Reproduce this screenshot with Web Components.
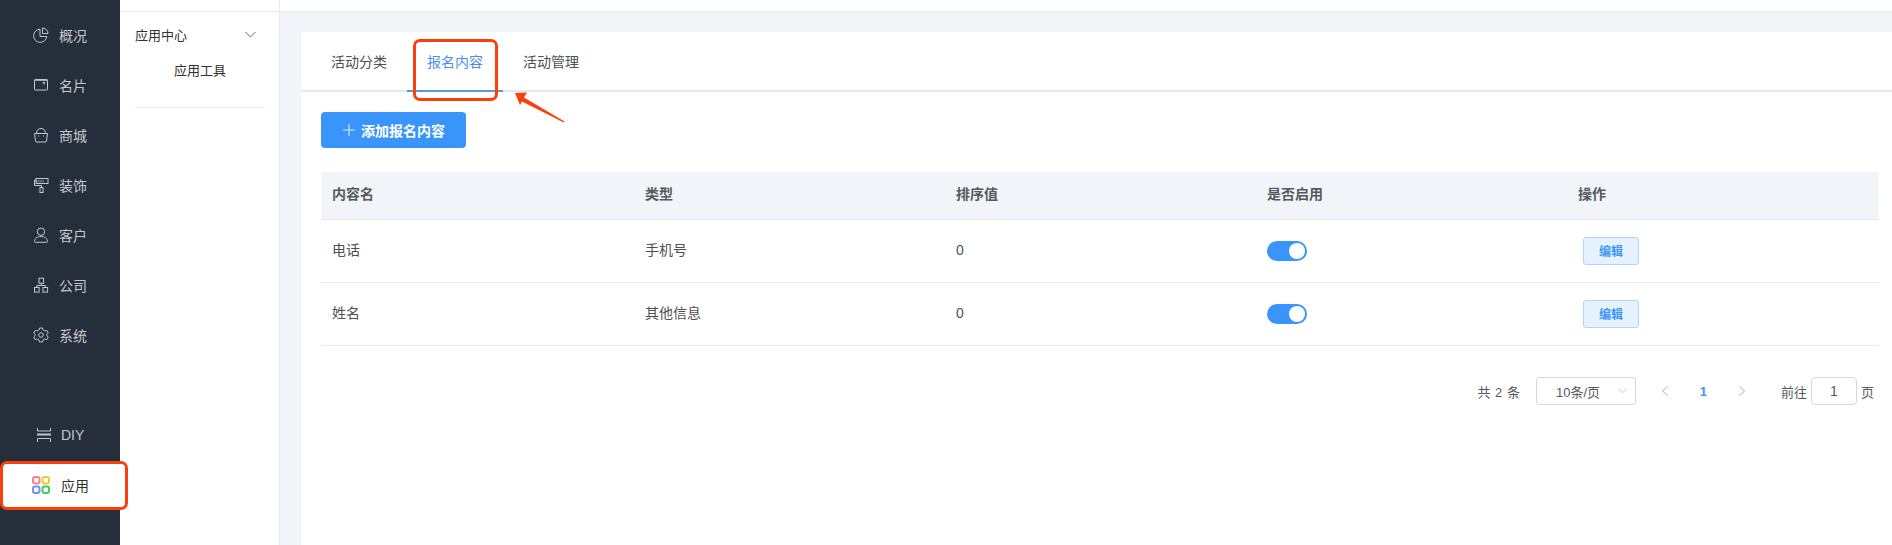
<!DOCTYPE html>
<html lang="zh">
<head>
<meta charset="utf-8">
<title>报名内容</title>
<style>
  html, body { margin: 0; height: 100%; overflow: hidden; }
  body { font-family: "Liberation Sans", "Noto Sans CJK SC", sans-serif; font-size: 14px; }
</style>
</head>
<body>
<app-shell>
  <side-nav slot="nav">
    <nav-item label="概况" icon="pie"></nav-item>
    <nav-item label="名片" icon="wallet"></nav-item>
    <nav-item label="商城" icon="bag"></nav-item>
    <nav-item label="装饰" icon="roller"></nav-item>
    <nav-item label="客户" icon="user"></nav-item>
    <nav-item label="公司" icon="org"></nav-item>
    <nav-item label="系统" icon="gear"></nav-item>
    <nav-item slot="bottom" label="DIY" icon="diy"></nav-item>
    <nav-item slot="bottom" label="应用" icon="apps" active></nav-item>
  </side-nav>
  <sub-nav slot="sub"></sub-nav>
  <tab-card>
    <tab-bar></tab-bar>
    <add-button>添加报名内容</add-button>
    <data-table></data-table>
    <page-bar></page-bar>
  </tab-card>
</app-shell>

<script>
const ICONS = {
  pie: '<path d="M7 2.200A6.600 6.600 0 1 0 13.800 9.500H7z"/><path d="M9.500 1A5.500 5.500 0 0 1 15 6.500H9.500z"/>',
  wallet: '<rect x="1.500" y="2.500" width="13" height="10.500" rx=".8"/><path d="M1.500 3.200h13" stroke-width="1.200"/><circle cx="11" cy="6" r=".9"/>',
  bag: '<path d="M1.500 6.500h13l-1 7.500a1 1 0 0 1-1 1h-9a1 1 0 0 1-1-1z"/><path d="M3.500 6.500C3.500 3 5.500 1.500 8 1.500s4.500 1.500 4.500 5"/><path d="M5.500 8.500v1M10.500 8.500v1"/>',
  roller: '<rect x="3" y="1.500" width="12" height="5"/><path d="M3 3h8v2.500H3z" fill="currentColor" opacity=".35" stroke="none"/><path d="M3 3H1.500v5.500h7v2"/><rect x="7" y="10.500" width="3" height="5"/>',
  user: '<circle cx="8" cy="4.700" r="3.700"/><path d="M1.500 14.500c0-3 2.500-5 6.500-5s6.500 2 6.500 5c0 .5-.3.8-1 .8h-11c-.7 0-1-.3-1-.8z"/>',
  org: '<rect x="6" y="1.200" width="4.600" height="5"/><rect x="1.500" y="10.500" width="4.600" height="4.600"/><rect x="10" y="10.500" width="4.600" height="4.600"/><path d="M8.300 6.200v2.300H3.800v2M8.300 8.500h4v2"/>',
  gear: '<path stroke-linejoin="round" d="M6.500 1h3l.5 2 1.800 1 2-.6 1.500 2.600-1.500 1.400v1.200l1.500 1.400-1.500 2.600-2-.6-1.800 1-.5 2h-3l-.5-2-1.800-1-2 .6-1.500-2.600 1.500-1.400V7.400L.7 6l1.500-2.600 2 .6 1.800-1z"/><circle cx="8" cy="8" r="2.300"/>',
  diy: '<path d="M1.500 1v3h13V1"/><path d="M1 7.500h14" stroke-width="2"/><path d="M1.500 15v-3.500h13V15"/>'
}
const APPS_ICON = `<svg viewBox="0 0 18 18" width="18" height="18" fill="none" stroke-width="2">
  <rect x="1" y="1" width="6.500" height="6.500" rx="2" stroke="#f9808a"/>
  <rect x="10.500" y="1" width="6.500" height="6.500" rx="2" stroke="#fbc531"/>
  <rect x="1" y="10.500" width="6.500" height="6.500" rx="2" stroke="#6f93f5"/>
  <rect x="10.500" y="10.500" width="6.500" height="6.500" rx="2" stroke="#3fca68"/>
</svg>`

class AppShell extends HTMLElement {
  constructor() {
    super()
    this.attachShadow({ mode: 'open' }).innerHTML = `
      <style>
        :host { display: flex; height: 545px; background: #f1f4f8; }
        .right { flex: 1; min-width: 0; display: flex; flex-direction: column; }
        .top { height: 11px; flex: none; background: #fff; border-bottom: 1px solid #e8eaee; }
        .main { flex: 1; min-height: 0; padding: 20px 0 0 21px; }
      </style>
      <slot name="nav"></slot>
      <slot name="sub"></slot>
      <div class="right">
        <div class="top"></div>
        <div class="main"><slot></slot></div>
      </div>`
  }
}
customElements.define('app-shell', AppShell)

class SideNav extends HTMLElement {
  constructor() {
    super()
    this.attachShadow({ mode: 'open' }).innerHTML = `
      <style>
        :host { display: flex; flex-direction: column; justify-content: space-between; width: 120px; flex: none; background: #252f3b; padding: 10px 0 35px; box-sizing: border-box; }
        .list { display: flex; flex-direction: column; }
        .bottom { display: flex; flex-direction: column; }
      </style>
      <div class="list"><slot></slot></div>
      <div class="bottom"><slot name="bottom"></slot></div>`
  }
}
customElements.define('side-nav', SideNav)

class NavItem extends HTMLElement {
  constructor() {
    super()
    const icon = this.getAttribute('icon')
    const svg = icon === 'apps' ? APPS_ICON
      : `<svg viewBox="0 0 16 16" width="16" height="16" fill="none" stroke="currentColor" stroke-width="1">${ICONS[icon]}</svg>`
    this.attachShadow({ mode: 'open' }).innerHTML = `
      <style>
        :host { display: flex; align-items: center; height: 50px; box-sizing: border-box; padding-left: 33px; gap: 10px; color: #c4c7cb; font-size: 14px; position: relative; }
        :host([active]) { color: #303133; padding-left: 32px; gap: 11px; }
        :host([icon="diy"]) { padding-left: 36px; gap: 9px; }
        svg { flex: none; display: block; position: relative; z-index: 1; }
        span { position: relative; z-index: 1; padding-bottom: 1px; }
        .mark { display: none; position: absolute; left: 0; top: 1px; width: 128px; height: 49px; box-sizing: border-box; background: #fff; border: 3px solid #fb3f0b; border-radius: 7px; }
        :host([active]) .mark { display: block; }
      </style>
      ${svg}<span>${this.getAttribute('label')}</span><i class="mark"></i>`
  }
}
customElements.define('nav-item', NavItem)

class SubNav extends HTMLElement {
  constructor() {
    super()
    this.attachShadow({ mode: 'open' }).innerHTML = `
      <style>
        :host { display: block; width: 160px; flex: none; background: #fff; box-sizing: border-box; border-right: 1px solid #e9e9e9; font-size: 13px; color: #303133; }
        .strip { height: 11px; border-bottom: 1px solid #e8eaee; }
        .body { padding: 0 14px 0 15px; }
        .head { display: flex; align-items: center; justify-content: space-between; height: 45px; }
        .head svg { display: block; margin-right: 9px; }
        .item { text-align: center; line-height: 24px; margin-top: 2px; padding-bottom: 24px; border-bottom: 1px solid #e8e9f0; }
      </style>
      <div class="strip"></div>
      <div class="body">
        <div class="head"><span>应用中心</span>
          <svg width="11" height="7" viewBox="0 0 11 7" fill="none" stroke="#555b63" stroke-width=".9"><path d="M.5 1l5 5 5-5"/></svg></div>
        <div class="item">应用工具</div>
      </div>`
  }
}
customElements.define('sub-nav', SubNav)

class TabCard extends HTMLElement {
  constructor() {
    super()
    this.attachShadow({ mode: 'open' }).innerHTML = `
      <style>
        :host { display: block; height: 100%; background: #fff; }
      </style>
      <slot></slot>`
  }
}
customElements.define('tab-card', TabCard)

class TabBar extends HTMLElement {
  constructor() {
    super()
    this.attachShadow({ mode: 'open' }).innerHTML = `
      <style>
        :host { display: flex; height: 60px; box-sizing: border-box; border-bottom: 2px solid #e4e7ed; padding-left: 10px; position: relative; color: #303133; font-size: 14px; }
        .tab { padding: 12px 20px 0; height: 60px; box-sizing: border-box; line-height: 36px; color: #4d5156; }
        .tab.on { color: #4b8fe8; border-bottom: 2px solid #5a96e6; }
        .mark { position: absolute; left: 112px; top: 7px; width: 85px; height: 62px; box-sizing: border-box; border: 3px solid #fb3f0b; border-radius: 7px; }
        svg { position: absolute; left: 213px; top: 60px; }
      </style>
      <div class="tab">活动分类</div>
      <div class="tab on">报名内容</div>
      <div class="tab">活动管理</div>
      <i class="mark"></i>
      <svg width="52" height="32" viewBox="0 0 52 32"><path fill="#fb3f0b" d="M1 1l12-.5-3 5L50.500 29.500l-.7 1.100L8 9.500l-2 3.500z"/></svg>`
  }
}
customElements.define('tab-bar', TabBar)

class AddButton extends HTMLElement {
  constructor() {
    super()
    this.attachShadow({ mode: 'open' }).innerHTML = `
      <style>
        :host { display: flex; align-items: center; width: 145px; height: 36px; margin: 20px 0 24px 20px; box-sizing: border-box; padding-left: 22px; gap: 6px; background: #3a95fb; border-radius: 4px; color: #fff; font-size: 14px; font-weight: 700; }
        svg { display: block; flex: none; }
      </style>
      <svg width="12" height="12" viewBox="0 0 12 12" stroke="#cfe4fe" stroke-width="1.200"><path d="M6 0v12M0 6h12"/></svg>
      <span><slot></slot></span>`
  }
}
customElements.define('add-button', AddButton)

class ToggleSwitch extends HTMLElement {
  constructor() {
    super()
    this.attachShadow({ mode: 'open' }).innerHTML = `
      <style>
        :host { display: block; width: 40px; height: 20px; background: #3a95fb; border-radius: 10px; position: relative; }
        i { position: absolute; right: 2px; top: 2px; width: 16px; height: 16px; border-radius: 50%; background: #fff; }
      </style><i></i>`
  }
}
customElements.define('toggle-switch', ToggleSwitch)

class DataTable extends HTMLElement {
  constructor() {
    super()
    const rows = [['电话', '手机号', '0'], ['姓名', '其他信息', '0']]
    const cell = t => `<div class="${t === '0' ? 'num' : 'txt'}">${t}</div>`
    this.attachShadow({ mode: 'open' }).innerHTML = `
      <style>
        :host { display: block; margin: 0 13px 0 20px; font-size: 14px; color: #4d5156; }
        .row { display: grid; grid-template-columns: 313px 311px 311px 311px 1fr; align-items: center; padding-left: 11px; height: 63px; box-sizing: border-box; border-bottom: 1px solid #e8e9f1; }
        .head { height: 48px; background: #f1f4f8; font-weight: 700; color: #55595f; }
        .txt { padding-bottom: 5px; }
        .num { padding-bottom: 3px; }
        .edit { display: flex; align-items: center; justify-content: center; width: 56px; height: 28px; margin-left: 5px; box-sizing: border-box; background: #e6f1fe; border: 1px solid #aed3fc; border-radius: 3px; color: #3a95fb; font-size: 12px; font-weight: 700; padding-bottom: 2px; }
      </style>
      <div class="row head">${['内容名', '类型', '排序值', '是否启用', '操作'].map(cell).join('')}</div>
      ${rows.map(r => `<div class="row">${r.map(cell).join('')}<div><toggle-switch></toggle-switch></div><div><span class="edit">编辑</span></div></div>`).join('')}`
  }
}
customElements.define('data-table', DataTable)

class PageBar extends HTMLElement {
  constructor() {
    super()
    this.attachShadow({ mode: 'open' }).innerHTML = `
      <style>
        :host { display: flex; align-items: center; justify-content: flex-end; height: 30px; margin-top: 30px; padding-right: 18px; font-size: 13px; color: #55595f; }
        .total { word-spacing: 1px; }
        .sel { display: flex; align-items: center; justify-content: space-between; width: 100px; height: 28px; margin-left: 16px; box-sizing: border-box; border: 1px solid #d5d7e2; border-radius: 3px; padding: 0 8px 0 19px; }
        .pg { display: flex; align-items: center; margin: 0 29px 0 19px; }
        .cell { width: 57px; text-align: center; font-weight: 700; color: #3a95fb; }
        svg { display: block; }
        .go { width: 46px; height: 28px; box-sizing: border-box; border: 1px solid #d5d7e2; border-radius: 4px; margin: 0 4px; display: flex; align-items: center; justify-content: center; font-size: 14px; }
        .arrow { width: 20px; display: flex; justify-content: center; }
      </style>
      <span class="total">共 2 条</span>
      <div class="sel"><span>10条/页</span><svg width="9" height="6" viewBox="0 0 9 6" fill="none" stroke="#c4c7cf"><path d="M.5 .8l4 4 4-4"/></svg></div>
      <div class="pg">
        <div class="arrow"><svg width="6" height="10" viewBox="0 0 6 10" fill="none" stroke="#a8abb2"><path d="M5.500 .5l-5 4.500 5 4.500"/></svg></div>
        <div class="cell">1</div>
        <div class="arrow"><svg width="6" height="10" viewBox="0 0 6 10" fill="none" stroke="#a8abb2"><path d="M.5 .5l5 4.500-5 4.500"/></svg></div>
      </div>
      <span>前往</span><div class="go">1</div><span>页</span>`
  }
}
customElements.define('page-bar', PageBar)
</script>
</body>
</html>
